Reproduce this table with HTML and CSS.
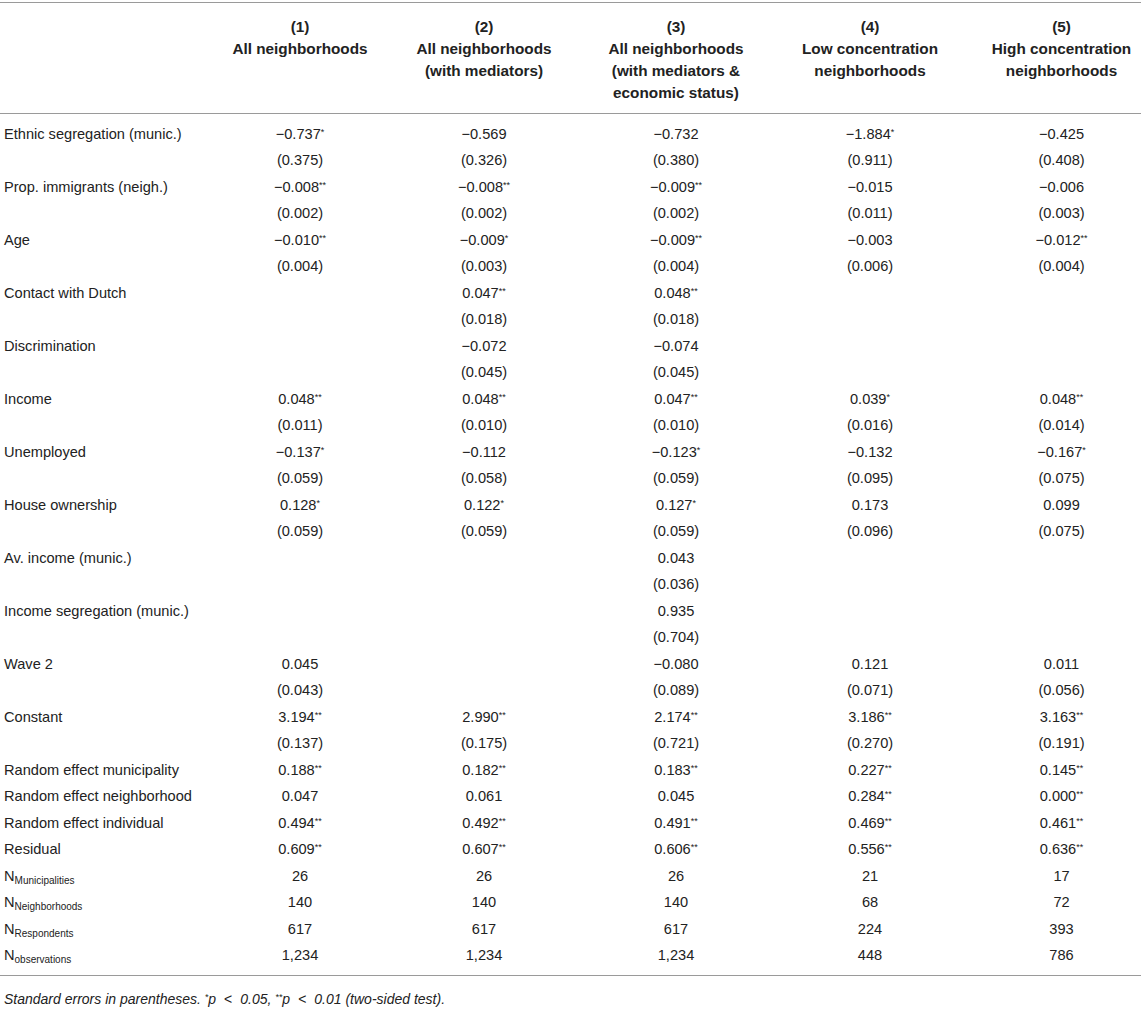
FILE: index.html
```html
<!DOCTYPE html>
<html>
<head>
<meta charset="utf-8">
<link rel="stylesheet" href="styles.css">
</head>
<body>
<div class="wrap">
<table class="reg">
<colgroup>
<col class="c-label"><col class="c1"><col class="c2"><col class="c3"><col class="c4"><col class="c5">
</colgroup>
<thead>
<tr>
<th></th>
<th>(1)<br>All neighborhoods</th>
<th>(2)<br>All neighborhoods<br>(with mediators)</th>
<th>(3)<br>All neighborhoods<br>(with mediators &amp;<br>economic status)</th>
<th>(4)<br>Low concentration<br>neighborhoods</th>
<th class="last">(5)<br>High concentration<br>neighborhoods</th>
</tr>
</thead>
<tbody>
<tr class="first"><td>Ethnic segregation (munic.)</td><td>−0.737<sup>*</sup></td><td>−0.569</td><td>−0.732</td><td>−1.884<sup>*</sup></td><td class="last">−0.425</td></tr>
<tr><td></td><td>(0.375)</td><td>(0.326)</td><td>(0.380)</td><td>(0.911)</td><td class="last">(0.408)</td></tr>
<tr><td>Prop. immigrants (neigh.)</td><td>−0.008<sup>**</sup></td><td>−0.008<sup>**</sup></td><td>−0.009<sup>**</sup></td><td>−0.015</td><td class="last">−0.006</td></tr>
<tr><td></td><td>(0.002)</td><td>(0.002)</td><td>(0.002)</td><td>(0.011)</td><td class="last">(0.003)</td></tr>
<tr><td>Age</td><td>−0.010<sup>**</sup></td><td>−0.009<sup>*</sup></td><td>−0.009<sup>**</sup></td><td>−0.003</td><td class="last">−0.012<sup>**</sup></td></tr>
<tr><td></td><td>(0.004)</td><td>(0.003)</td><td>(0.004)</td><td>(0.006)</td><td class="last">(0.004)</td></tr>
<tr><td>Contact with Dutch</td><td></td><td>0.047<sup>**</sup></td><td>0.048<sup>**</sup></td><td></td><td class="last"></td></tr>
<tr><td></td><td></td><td>(0.018)</td><td>(0.018)</td><td></td><td class="last"></td></tr>
<tr><td>Discrimination</td><td></td><td>−0.072</td><td>−0.074</td><td></td><td class="last"></td></tr>
<tr><td></td><td></td><td>(0.045)</td><td>(0.045)</td><td></td><td class="last"></td></tr>
<tr><td>Income</td><td>0.048<sup>**</sup></td><td>0.048<sup>**</sup></td><td>0.047<sup>**</sup></td><td>0.039<sup>*</sup></td><td class="last">0.048<sup>**</sup></td></tr>
<tr><td></td><td>(0.011)</td><td>(0.010)</td><td>(0.010)</td><td>(0.016)</td><td class="last">(0.014)</td></tr>
<tr><td>Unemployed</td><td>−0.137<sup>*</sup></td><td>−0.112</td><td>−0.123<sup>*</sup></td><td>−0.132</td><td class="last">−0.167<sup>*</sup></td></tr>
<tr><td></td><td>(0.059)</td><td>(0.058)</td><td>(0.059)</td><td>(0.095)</td><td class="last">(0.075)</td></tr>
<tr><td>House ownership</td><td>0.128<sup>*</sup></td><td>0.122<sup>*</sup></td><td>0.127<sup>*</sup></td><td>0.173</td><td class="last">0.099</td></tr>
<tr><td></td><td>(0.059)</td><td>(0.059)</td><td>(0.059)</td><td>(0.096)</td><td class="last">(0.075)</td></tr>
<tr><td>Av. income (munic.)</td><td></td><td></td><td>0.043</td><td></td><td class="last"></td></tr>
<tr><td></td><td></td><td></td><td>(0.036)</td><td></td><td class="last"></td></tr>
<tr><td>Income segregation (munic.)</td><td></td><td></td><td>0.935</td><td></td><td class="last"></td></tr>
<tr><td></td><td></td><td></td><td>(0.704)</td><td></td><td class="last"></td></tr>
<tr><td>Wave 2</td><td>0.045</td><td></td><td>−0.080</td><td>0.121</td><td class="last">0.011</td></tr>
<tr><td></td><td>(0.043)</td><td></td><td>(0.089)</td><td>(0.071)</td><td class="last">(0.056)</td></tr>
<tr><td>Constant</td><td>3.194<sup>**</sup></td><td>2.990<sup>**</sup></td><td>2.174<sup>**</sup></td><td>3.186<sup>**</sup></td><td class="last">3.163<sup>**</sup></td></tr>
<tr><td></td><td>(0.137)</td><td>(0.175)</td><td>(0.721)</td><td>(0.270)</td><td class="last">(0.191)</td></tr>
<tr><td>Random effect municipality</td><td>0.188<sup>**</sup></td><td>0.182<sup>**</sup></td><td>0.183<sup>**</sup></td><td>0.227<sup>**</sup></td><td class="last">0.145<sup>**</sup></td></tr>
<tr><td>Random effect neighborhood</td><td>0.047</td><td>0.061</td><td>0.045</td><td>0.284<sup>**</sup></td><td class="last">0.000<sup>**</sup></td></tr>
<tr><td>Random effect individual</td><td>0.494<sup>**</sup></td><td>0.492<sup>**</sup></td><td>0.491<sup>**</sup></td><td>0.469<sup>**</sup></td><td class="last">0.461<sup>**</sup></td></tr>
<tr><td>Residual</td><td>0.609<sup>**</sup></td><td>0.607<sup>**</sup></td><td>0.606<sup>**</sup></td><td>0.556<sup>**</sup></td><td class="last">0.636<sup>**</sup></td></tr>
<tr><td>N<sub>Municipalities</sub></td><td>26</td><td>26</td><td>26</td><td>21</td><td class="last">17</td></tr>
<tr><td>N<sub>Neighborhoods</sub></td><td>140</td><td>140</td><td>140</td><td>68</td><td class="last">72</td></tr>
<tr><td>N<sub>Respondents</sub></td><td>617</td><td>617</td><td>617</td><td>224</td><td class="last">393</td></tr>
<tr class="end"><td>N<sub>observations</sub></td><td>1,234</td><td>1,234</td><td>1,234</td><td>448</td><td class="last">786</td></tr>
</tbody>
</table>
<p class="note">Standard errors in parentheses. <sup>*</sup>p<span class="lt">&lt;</span>0.05, <sup>**</sup>p<span class="lt">&lt;</span>0.01 (two-sided test).</p>
</div>
</body>
</html>
```
FILE: styles.css
```css
html, body {
  margin: 0;
  padding: 0;
  background: #ffffff;
}
.wrap {
  width: 1141px;
  padding-top: 2px;
  font-family: "Liberation Sans", Arial, Helvetica, sans-serif;
  color: #222222;
}
.reg {
  width: 1141px;
  border-collapse: collapse;
  table-layout: fixed;
  font-size: 14.6px;
}
.c-label { width: 210px; }
.c1 { width: 180px; }
.c2 { width: 188px; }
.c3 { width: 196px; }
.c4 { width: 192px; }
.c5 { width: 175px; }
.reg thead th {
  border-top: 1px solid #9a9a9a;
  border-bottom: 1px solid #9a9a9a;
  font-weight: bold;
  font-size: 15.3px;
  text-align: center;
  vertical-align: top;
  line-height: 21.9px;
  padding: 13px 0 9px;
  height: 88px;
  box-sizing: content-box;
}
.reg th.last, .reg td.last {
  padding-left: 16px;
}
.reg td {
  text-align: center;
  line-height: 26.48px;
  padding: 0;
  white-space: nowrap;
}
.reg td:first-child {
  text-align: left;
  padding-left: 4px;
}
.reg tr.first td { padding-top: 7px; }
.reg tr.end td {
  padding-bottom: 6px;
  border-bottom: 1px solid #9a9a9a;
}
.reg sup {
  font-size: 9px;
  line-height: 0;
  vertical-align: 4px;
}
.reg sub {
  font-size: 10px;
  line-height: 0;
  vertical-align: -3px;
}
.note {
  margin: 15px 0 0 4px;
  font-size: 14px;
  font-style: italic;
  line-height: 16px;
}
.note sup {
  font-size: 9px;
  line-height: 0;
  vertical-align: 4px;
}
.note .lt {
  display: inline-block;
  margin: 0 8px;
  font-style: normal;
}
```
